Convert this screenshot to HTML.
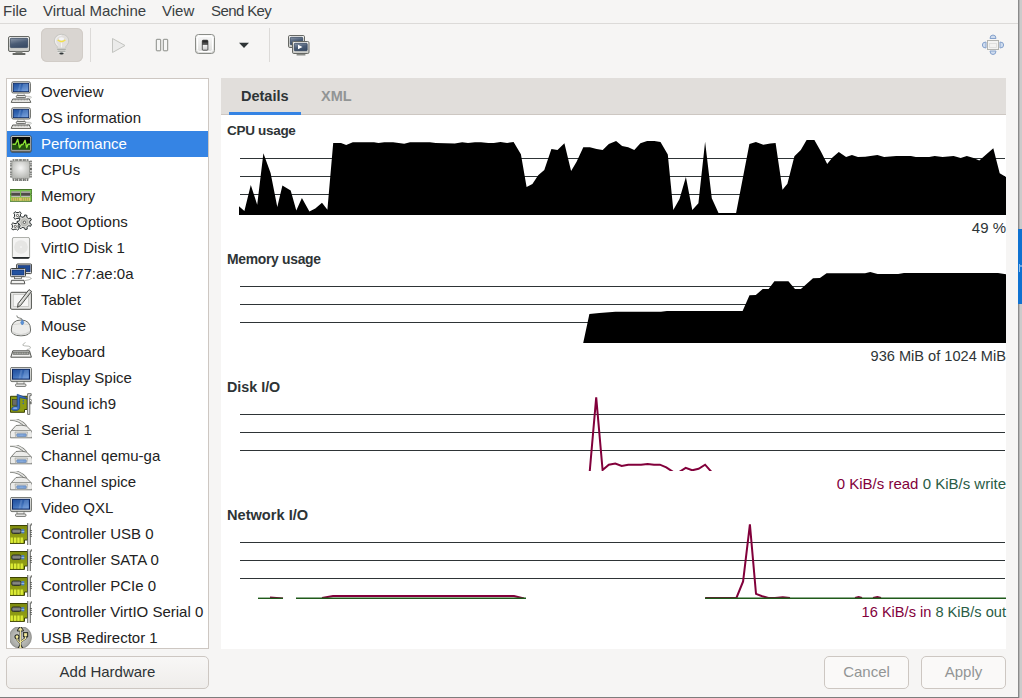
<!DOCTYPE html>
<html><head><meta charset="utf-8">
<style>
*{margin:0;padding:0;box-sizing:border-box}
html,body{width:1022px;height:698px;overflow:hidden;background:#f6f5f4;font-family:"Liberation Sans",sans-serif;color:#2e3436;position:relative}
.a{position:absolute}
.t{position:absolute;white-space:nowrap;font-size:15px;line-height:18px;color:#3a4042}
#menubar{left:0;top:0;width:1018px;height:24px;border-bottom:1px solid #dcdad8}
#list{left:6px;top:78px;width:203px;height:571px;background:#fff;border:1px solid #cdc7c2;overflow:hidden}
.row{position:absolute;left:0;width:201px;height:26px}
.row .lbl{position:absolute;left:34px;top:4px;font-size:15px;line-height:18px;color:#222;white-space:nowrap}
.row.sel{background:#3584e4}
.row.sel .lbl{color:#fff}
.ico{position:absolute;left:3px;top:2px;width:22px;height:22px;overflow:visible}
.btn{position:absolute;border:1px solid #cdc7c2;border-radius:5px;background:linear-gradient(#f8f7f6,#efedeb);text-align:center;font-size:15px;line-height:29px}
#nb{left:221px;top:78px;width:785px;height:571px;background:#fff}
#tabs{left:221px;top:78px;width:785px;height:37px;background:#e1dedb;border-bottom:1px solid #cdc7c2}
.glabel{position:absolute;font-weight:bold;font-size:14px;line-height:17px;color:#2e3436;letter-spacing:-0.3px}
.rlabel{position:absolute;right:16px;font-size:15px;line-height:18px;color:#2e3436;white-space:nowrap;text-align:right}
</style></head><body>
<svg width="0" height="0" style="position:absolute">
<defs>
<linearGradient id="gscr" x1="0" y1="0" x2="0.5" y2="1"><stop offset="0" stop-color="#1d4d9c"/><stop offset="0.6" stop-color="#3a6cb6"/><stop offset="1" stop-color="#5b8bd0"/></linearGradient>
<linearGradient id="gframe" x1="0" y1="0" x2="0" y2="1"><stop offset="0" stop-color="#f4f4f2"/><stop offset="1" stop-color="#c8c9c5"/></linearGradient>
<linearGradient id="gdark" x1="0" y1="0" x2="0" y2="1"><stop offset="0" stop-color="#8b96a6"/><stop offset="1" stop-color="#3a4d66"/></linearGradient>
<radialGradient id="gchip" cx="0.5" cy="0.4" r="0.6"><stop offset="0" stop-color="#f6f6f5"/><stop offset="1" stop-color="#b9bab6"/></radialGradient>
<linearGradient id="gcard" x1="0" y1="0" x2="0" y2="1"><stop offset="0" stop-color="#7d8a0e"/><stop offset="0.6" stop-color="#8e9b14"/><stop offset="1" stop-color="#9aa818"/></linearGradient>
<radialGradient id="gusb" cx="0.5" cy="0.5" r="0.55"><stop offset="0" stop-color="#d2d3cf"/><stop offset="0.8" stop-color="#a9aaa6"/><stop offset="1" stop-color="#7b7c78"/></radialGradient>
<symbol id="i-comp" viewBox="0 0 22 22">
 <rect x="1.7" y="0.8" width="18.7" height="11.2" rx="1.6" fill="url(#gframe)" stroke="#696b66" stroke-width="1"/>
 <rect x="3.3" y="2.3" width="15.4" height="8.3" fill="url(#gscr)" stroke="#0a2763" stroke-width="0.8"/>
 <path d="M9.5 2.8 L7.6 10.2 H9.4 L11.3 2.8 Z M13.2 2.8 L11.3 10.2 H18.2 V2.8 Z" fill="#a9c4ea" opacity="0.25"/>
 <path d="M8 12.4 H14 L14.6 14.8 H7.4 Z" fill="#f0f0ee" stroke="#8a8c87" stroke-width="0.6"/>
 <rect x="6.3" y="14.6" width="9.4" height="2" rx="0.8" fill="#f4f4f2" stroke="#555753" stroke-width="0.9"/>
 <path d="M15.5 15.2 Q21.5 15 21.5 16.3 Q21.5 17.3 17 17.3" stroke="#b8bab5" fill="none" stroke-width="0.9"/>
 <path d="M2.7 18 H19.3 L20.8 21.4 H1.2 Z" fill="#f4f4f2" stroke="#5d5f5a" stroke-width="1"/>
 <path d="M3.6 18.9 H18.4" stroke="#6e706b" stroke-width="0.9" stroke-dasharray="1 0.5"/>
</symbol>
<symbol id="i-perf" viewBox="0 0 22 22">
 <rect x="0.9" y="2.9" width="20.2" height="16.2" rx="1.2" fill="#dcdcda" stroke="#3b3d39" stroke-width="1"/>
 <rect x="1.6" y="3.6" width="18.8" height="1" fill="#f4f4f2"/>
 <rect x="2.1" y="4" width="17.9" height="12.7" fill="#050805"/>
 <rect x="2.1" y="11.5" width="17.9" height="5.2" fill="#2d6a12" opacity="0.75"/>
 <path d="M2.5 11.3 H5.5 L7.7 6.4 L9.5 14.6 L11.5 11.5 H13 L15.1 7.3 L16.7 14.6 L18 11.3 H20" fill="none" stroke="#8ae234" stroke-width="1.4" stroke-linejoin="round"/>
 <rect x="1" y="17.5" width="20" height="1.6" fill="#5f615c"/>
</symbol>
<symbol id="i-cpu" viewBox="0 0 22 22">
 <g fill="#d0d0ce" stroke="#4a4c48" stroke-width="1"><rect x="3.2" y="-0.9" width="2.8" height="4" rx="1.4"/><rect x="3.2" y="18.6" width="2.8" height="4" rx="1.4"/><rect x="7.2" y="-0.9" width="2.8" height="4" rx="1.4"/><rect x="7.2" y="18.6" width="2.8" height="4" rx="1.4"/><rect x="11.0" y="-0.9" width="2.8" height="4" rx="1.4"/><rect x="11.0" y="18.6" width="2.8" height="4" rx="1.4"/><rect x="15.0" y="-0.9" width="2.8" height="4" rx="1.4"/><rect x="15.0" y="18.6" width="2.8" height="4" rx="1.4"/><rect x="-0.9" y="2.2" width="4" height="2.8" rx="1.4"/><rect x="18.8" y="2.2" width="4" height="2.8" rx="1.4"/><rect x="-0.9" y="6.7" width="4" height="2.8" rx="1.4"/><rect x="18.8" y="6.7" width="4" height="2.8" rx="1.4"/><rect x="-0.9" y="10.5" width="4" height="2.8" rx="1.4"/><rect x="18.8" y="10.5" width="4" height="2.8" rx="1.4"/><rect x="-0.9" y="15.1" width="4" height="2.8" rx="1.4"/><rect x="18.8" y="15.1" width="4" height="2.8" rx="1.4"/></g>
 <rect x="1.9" y="2.1" width="17.6" height="17.3" rx="0.8" fill="url(#gchip)" stroke="#8e908b" stroke-width="0.6"/>
</symbol>
<symbol id="i-mem" viewBox="0 0 22 22">
 <path d="M-0.5 4.5 H21.8 V8.6 H21 V10 H21.8 V16.3 H-0.5 V10 H0.3 V8.6 H-0.5 Z" fill="#78c24c" stroke="#3a6a1c" stroke-width="0.9"/>
 <rect x="1.3" y="6.5" width="8.7" height="5.3" fill="#4d4b47"/><rect x="11.1" y="6.5" width="9" height="5.3" fill="#4d4b47"/>
 <rect x="1.3" y="6.5" width="8.7" height="1.2" fill="#c9c7c2"/><rect x="11.1" y="6.5" width="9" height="1.2" fill="#c9c7c2"/>
 <rect x="1.3" y="10.8" width="8.7" height="1" fill="#d8d6d1"/><rect x="11.1" y="10.8" width="9" height="1" fill="#d8d6d1"/>
 <rect x="1.2" y="12.6" width="19" height="3.2" fill="#d9c66a"/>
 <path d="M2.3 12.6 V15.8 M4.3 12.6 V15.8 M6.3 12.6 V15.8 M8.3 12.6 V15.8 M12.3 12.6 V15.8 M14.3 12.6 V15.8 M16.3 12.6 V15.8 M18.3 12.6 V15.8" stroke="#8e9a3a" stroke-width="0.7"/>
</symbol>
<symbol id="i-gear" viewBox="0 0 22 22">
 <path d="M10.49 5.89 L11.31 6.89 L9.87 8.33 L8.87 7.50 L6.11 7.49 L6.11 7.49 L5.11 8.31 L3.67 6.87 L4.50 5.87 L4.51 3.11 L4.51 3.11 L3.69 2.11 L5.13 0.67 L6.13 1.50 L8.89 1.51 L8.89 1.51 L9.89 0.69 L11.33 2.13 L10.50 3.13 L10.49 5.89Z" fill="#f2f2f0" stroke="#2e3436" stroke-width="1"/>
 <circle cx="7.5" cy="4.5" r="1.1" fill="#fff" stroke="#3a3a36" stroke-width="0.8"/>
 <path d="M19.89 12.41 L21.53 13.29 L20.60 15.34 L18.86 14.68 L16.95 16.28 L16.95 16.28 L17.29 18.11 L15.11 18.67 L14.54 16.90 L12.09 16.40 L12.09 16.40 L10.88 17.81 L9.08 16.45 L10.11 14.90 L8.97 12.68 L8.97 12.68 L7.12 12.60 L7.06 10.35 L8.91 10.19 L9.94 7.92 L9.94 7.92 L8.84 6.42 L10.56 4.97 L11.85 6.32 L14.26 5.70 L14.26 5.70 L14.75 3.91 L16.96 4.36 L16.71 6.20 L18.69 7.70 L18.69 7.70 L20.40 6.97 L21.42 8.97 L19.83 9.92 L19.89 12.41Z" fill="#d9d9d6" stroke="#2e3436" stroke-width="1"/>
 <circle cx="14.4" cy="11.3" r="3.6" fill="#c4c5c1" stroke="#a8a9a5" stroke-width="0.6"/>
 <circle cx="14.4" cy="11.3" r="1.2" fill="#fff" stroke="#3a3a36" stroke-width="0.8"/>
 <path d="M8.20 16.75 L9.03 17.74 L7.62 19.14 L6.63 18.31 L3.95 18.30 L3.95 18.30 L2.96 19.13 L1.56 17.72 L2.39 16.73 L2.40 14.05 L2.40 14.05 L1.57 13.06 L2.98 11.66 L3.97 12.49 L6.65 12.50 L6.65 12.50 L7.64 11.67 L9.04 13.08 L8.21 14.07 L8.20 16.75Z" fill="#f2f2f0" stroke="#2e3436" stroke-width="1"/>
 <circle cx="5.3" cy="15.4" r="1.1" fill="#fff" stroke="#3a3a36" stroke-width="0.8"/>
</symbol>
<symbol id="i-disk" viewBox="0 0 22 22">
 <rect x="2.4" y="0.4" width="17.2" height="21" rx="1.6" fill="#f4f4f3" stroke="#9c9e99" stroke-width="0.9"/>
 <circle cx="11" cy="10" r="6.8" fill="#e6e6e4"/>
 <circle cx="11" cy="10" r="0.8" fill="#fbfbfb"/>
 <path d="M2.4 20 H19.6 Q19.6 21.7 18 21.7 H4 Q2.4 21.7 2.4 20 Z" fill="#262a2c"/>
</symbol>
<symbol id="i-nic" viewBox="0 0 22 22">
 <rect x="6.6" y="1" width="15" height="9.6" rx="1" fill="#e9e9e7" stroke="#3f413d" stroke-width="1"/>
 <rect x="8.1" y="2.5" width="12" height="6.3" fill="#1f4a94" stroke="#0a2763" stroke-width="0.6"/>
 <rect x="0.5" y="5.5" width="15" height="8.2" rx="1" fill="#e9e9e7" stroke="#3f413d" stroke-width="1"/>
 <rect x="2" y="7" width="12" height="5" fill="#2352a0" stroke="#0a2763" stroke-width="0.6"/>
 <path d="M15.5 14 Q20 13.5 21.5 15.5 Q20 17 15 17.5" stroke="#a9aba6" fill="none" stroke-width="0.9"/>
 <rect x="4.5" y="13.7" width="7" height="2" fill="#eee" stroke="#555753" stroke-width="0.7"/>
 <path d="M1.5 17.3 H14 L14.8 20.8 H0.8 Z" fill="#f2f2f0" stroke="#3f413d" stroke-width="0.9"/>
</symbol>
<symbol id="i-tab" viewBox="0 0 22 22">
 <rect x="0.6" y="3.3" width="20.8" height="17" rx="1.2" fill="#e6e6e4" stroke="#4f514d" stroke-width="1"/>
 <rect x="3.3" y="5.5" width="15.4" height="12" fill="#f6f6f5" stroke="#c2c3bf" stroke-width="0.8"/>
 <path d="M19 0.6 L21.6 2.4 L10.6 16.5 L7.5 18.3 L8.1 14.6 Z" fill="#c9cac6" stroke="#3f413d" stroke-width="0.9"/>
 <path d="M19.6 1.8 L9.2 15.2" stroke="#f4f4f2" stroke-width="0.8"/>
</symbol>
<symbol id="i-mouse" viewBox="0 0 22 22">
 <path d="M6.8 0.5 Q6.8 3 9.5 3 Q12.3 3 12.3 5.5" fill="none" stroke="#6d6f6a" stroke-width="0.9"/>
 <path d="M1.3 15 Q1.3 5 11 5 Q20.6 5 20.6 15 Q20.6 20.8 11 20.8 Q1.3 20.8 1.3 15 Z" fill="#ececea" stroke="#6d6f6a" stroke-width="1"/>
 <path d="M2.5 16 Q11 22 19.5 16 Q19 20 11 20.2 Q3 20 2.5 16 Z" fill="#d6d6d4"/>
 <path d="M3 9.5 Q11 8 19 9.5" fill="none" stroke="#cfd0cc" stroke-width="0.8"/>
 <path d="M12.3 4.8 L13.8 7.2 Q13.6 9.3 12.3 10 Q11 9.3 10.8 7.2 Z" fill="#5b93d8" stroke="#3f74bd" stroke-width="0.5"/>
</symbol>
<symbol id="i-kbd" viewBox="0 0 22 22">
 <path d="M15.5 1.5 Q12.5 3 12.8 4.2 Q13.2 5 19 5.2 Q21 5.6 20.3 7.2 Q19.8 8.2 17 8.5 V9.8" fill="none" stroke="#b0b2ad" stroke-width="0.9"/>
 <path d="M2.8 9.8 H19.5 L21.4 16.2 H0.8 Z" fill="#f2f2f0" stroke="#4f514d" stroke-width="1"/>
 <rect x="2.6" y="10.8" width="17" height="3" rx="0.8" fill="#6a6c68"/>
 <path d="M3.4 12.3 H18.8" stroke="#a9aba6" stroke-width="1.4" stroke-dasharray="1.3 0.4"/>
</symbol>
<symbol id="i-disp" viewBox="0 0 22 22">
 <rect x="0.6" y="0.4" width="20.8" height="14.2" rx="1.3" fill="url(#gframe)" stroke="#6d6f6a" stroke-width="1"/>
 <rect x="2.5" y="2.3" width="17" height="9.8" fill="url(#gscr)" stroke="#0a2763" stroke-width="1"/>
 <path d="M10.5 3 L8.5 11.5 H10.5 L12.5 3 Z M14.5 3 L12.5 11.5 H18.5 V3 Z" fill="#a9c4ea" opacity="0.25"/>
 <rect x="7" y="14.6" width="7" height="2.6" fill="#eaeae8" stroke="#6d6f6a" stroke-width="0.7"/>
 <rect x="5.5" y="17" width="10.5" height="2.4" rx="1" fill="#f0f0ee" stroke="#555753" stroke-width="0.8"/>
</symbol>
<symbol id="i-snd" viewBox="0 0 22 22">
 <path d="M0.5 3.3 H17.2 V16.5 H14.5 V19.3 H0.5 Z" fill="#8d9c12" stroke="#3d4405" stroke-width="1"/>
 <rect x="2.6" y="6.6" width="4.6" height="5.6" fill="#6a6c66" stroke="#2e3436" stroke-width="0.6"/>
 <rect x="12.6" y="7.2" width="1.4" height="1.3" fill="#2f5fb0"/><rect x="12.6" y="9.8" width="1.4" height="1.3" fill="#2f5fb0"/>
 <path d="M17.6 0.7 H21.2 V2.6 H19.8 V21.4 H17.6 Z" fill="#ececea" stroke="#5f615c" stroke-width="0.9"/>
 <rect x="19.9" y="6.7" width="1.6" height="1.6" fill="#fff" stroke="#5f615c" stroke-width="0.6"/><rect x="19.9" y="9.3" width="1.6" height="1.6" fill="#fff" stroke="#5f615c" stroke-width="0.6"/>
 <path d="M7.2 1.3 L15.5 4.3 L17.2 6 L9.6 4.6 V14.5 Q9.6 17.6 5 17.6 Q1.2 17.6 1.6 15.5 Q2.3 13.2 7.2 13.4 Z" fill="#3a6fc4" stroke="#1a3f86" stroke-width="0.7"/>
 <ellipse cx="5.2" cy="15.2" rx="2.2" ry="0.9" fill="#a8c4ec" opacity="0.7"/>
</symbol>
<symbol id="i-ser" viewBox="0 0 22 22">
 <path d="M-0.8 0.2 Q9 -0.5 16 7.5" fill="none" stroke="#777a74" stroke-width="3"/>
 <path d="M-0.8 0.2 Q9 -0.5 16 7.5" fill="none" stroke="#e4e4e2" stroke-width="1.6"/>
 <path d="M6 6.5 Q11 5.5 16.5 7 L21.5 12 Q22.8 13.5 22.5 17 L22 18.8 H0.5 L0 17 Q-0.3 13.5 1 12 Z" fill="#ececea" stroke="#6f716c" stroke-width="0.9"/>
 <path d="M1.5 11.5 H21" stroke="#8f918c" stroke-width="0.9"/>
 <path d="M5 13 H17.5 L16.8 18.3 H5.7 Z" fill="#dcdcda" stroke="#9c9e99" stroke-width="0.6"/>
 <rect x="6.8" y="14.8" width="9.4" height="2.6" rx="0.6" fill="#6f9ad6" stroke="#4f6f9f" stroke-width="0.5"/>
 <path d="M7.6 16.1 H15.6" stroke="#c5d8f0" stroke-width="0.8" stroke-dasharray="0.6 0.6"/>
</symbol>
<symbol id="i-ctl" viewBox="0 0 22 22">
 <path d="M-0.5 2.5 H17.5 V17 H14.5 V20.4 H-0.5 Z" fill="url(#gcard)" stroke="#3d4304" stroke-width="1"/>
 <g fill="#e4f43a" opacity="0.9"><rect x="0.6" y="14.5" width="2.3" height="5.4"/><rect x="4" y="14.5" width="2.3" height="5.4"/><rect x="7.3" y="14.5" width="2.3" height="5.4"/><rect x="10.6" y="14.5" width="2.3" height="5.4"/></g>
 <rect x="1.6" y="5.9" width="9.6" height="4.6" rx="1.8" fill="#676964" stroke="#232725" stroke-width="0.8"/>
 <rect x="2.8" y="7.4" width="7.4" height="1.4" fill="#8e908b"/>
 <rect x="11.4" y="6.1" width="2.9" height="4.3" fill="#4d7fc8"/><rect x="11.4" y="8" width="2.9" height="0.7" fill="#b8d0f0"/>
 <path d="M17.7 -0.6 H22 V1.9 H20.3 V22.6 H17.7 Z" fill="#ececea" stroke="#4f514d" stroke-width="0.9"/>
 <rect x="20.3" y="7.4" width="1.9" height="2" fill="#fff" stroke="#4f514d" stroke-width="0.7"/><rect x="20.3" y="11.4" width="1.9" height="2" fill="#fff" stroke="#4f514d" stroke-width="0.7"/>
</symbol>
<symbol id="i-usb" viewBox="0 0 22 22">
 <circle cx="10.35" cy="10.3" r="11.2" fill="url(#gusb)" stroke="#8a8b87" stroke-width="0.5"/>
 <g stroke="#262a28" stroke-width="1.8" fill="#262a28" stroke-linejoin="round">
 <path d="M10.4 -0.2 L13 3.6 H7.8 Z"/><path d="M10.4 3 V20.5"/><path d="M15.5 9.5 V11.5 L10.4 15"/><path d="M7 10 V12.5 L10.4 16.5"/>
 <rect x="13.8" y="5.8" width="3.5" height="3.7"/><circle cx="7" cy="9.8" r="1.7"/><path d="M8.6 21 L10.4 18.3 L12.2 21 Z"/>
 </g>
 <g stroke="#f5eb9c" stroke-width="1.1" fill="#f5eb9c" stroke-linejoin="round">
 <path d="M10.4 0.4 L12.5 3.3 H8.3 Z" stroke-width="0.5"/><path d="M10.4 3 V20.5"/><path d="M15.5 9.5 V11.5 L10.4 15" fill="none"/><path d="M7 10 V12.5 L10.4 16.5" fill="none"/>
 <rect x="14.2" y="6.2" width="2.7" height="2.9" stroke-width="0.3"/><circle cx="7" cy="9.8" r="1.3" stroke-width="0.3"/><path d="M9 21.5 L10.4 18.8 L11.8 21.5 Z" stroke-width="0.5"/>
 </g>
</symbol>
</defs></svg>

<div class="a" id="menubar"></div>
<div class="t" style="left:3px;top:2px">File</div>
<div class="t" style="left:43px;top:2px">Virtual Machine</div>
<div class="t" style="left:162px;top:2px">View</div>
<div class="t" style="left:211px;top:2px;letter-spacing:-0.6px">Send Key</div>

<!-- toolbar -->
<div class="a" style="left:41px;top:28px;width:42px;height:34px;background:#d9d5d1;border-radius:6px;box-shadow:inset 0 0 0 1px #d1ccc7"></div>
<div class="a" style="left:90px;top:28px;width:1px;height:34px;background:#dcdad8"></div>
<div class="a" style="left:269px;top:28px;width:1px;height:34px;background:#dcdad8"></div>
<svg class="a" style="left:0;top:24px" width="1018" height="44" viewBox="0 24 1018 44">
<defs>
<linearGradient id="gdscr" x1="0" y1="0" x2="0.4" y2="1"><stop offset="0" stop-color="#8e9aab"/><stop offset="0.6" stop-color="#4a5c75"/><stop offset="1" stop-color="#3b4e68"/></linearGradient>
<radialGradient id="gbulb" cx="0.5" cy="0.35" r="0.6"><stop offset="0" stop-color="#ffffff"/><stop offset="1" stop-color="#d7d7d5"/></radialGradient>
<linearGradient id="gsw" x1="0" y1="0" x2="0" y2="1"><stop offset="0" stop-color="#fafafa"/><stop offset="1" stop-color="#dcdcda"/></linearGradient>
<linearGradient id="gsw2" x1="0" y1="0" x2="0" y2="1"><stop offset="0" stop-color="#111"/><stop offset="0.45" stop-color="#666"/><stop offset="0.5" stop-color="#eee"/><stop offset="1" stop-color="#ccc"/></linearGradient>
</defs>
<!-- monitor -->
<rect x="8.5" y="36.5" width="21" height="15" rx="1.5" fill="url(#gframe)" stroke="#666864" stroke-width="1"/>
<rect x="10.3" y="38.3" width="17.4" height="9.3" rx="0.8" fill="url(#gdscr)" stroke="#2b3d57" stroke-width="0.7"/>
<rect x="15.5" y="51.5" width="7" height="1.6" fill="#8a8c87"/>
<rect x="12.5" y="53" width="13" height="2" rx="0.8" fill="#666864"/>
<!-- bulb -->
<path d="M61.5 34.3 C57 34.3 54.3 37.5 54.3 41 C54.3 43.5 56 45.2 57.2 46.5 L57.3 48 H65.7 L65.8 46.5 C67 45.2 68.7 43.5 68.7 41 C68.7 37.5 66 34.3 61.5 34.3 Z" fill="#e9e8e6" fill-opacity="0.55" stroke="#c3c4c0" stroke-width="0.9"/>
<path d="M61.5 35.4 C58 35.4 55.6 38 55.6 41 C55.6 43 56.8 44.3 57.8 45.5" fill="none" stroke="#f8f8f7" stroke-width="0.8"/>
<ellipse cx="61.5" cy="38.8" rx="2.6" ry="1.6" fill="#f4f4f6"/>
<path d="M57.7 40 Q61.5 43.2 65.3 40" fill="none" stroke="#f2e04a" stroke-width="1.5"/>
<path d="M61.5 42.6 V47.5" stroke="#f4f4f2" stroke-width="1"/>
<rect x="57.2" y="47.6" width="8.6" height="5.3" rx="1.2" fill="#e6e6e4"/>
<path d="M57.2 49.2 H65.8 M57.5 51.2 H65.5" stroke="#7f817c" stroke-width="0.8"/>
<ellipse cx="61.5" cy="53.6" rx="2.2" ry="1" fill="#2e3436"/>
<!-- play (disabled) -->
<path d="M112.5 38.5 L125 45.5 L112.5 52.5 Z" fill="#ebebea" stroke="#c3c4c0" stroke-width="1"/>
<!-- pause (disabled) -->
<rect x="156.3" y="39.3" width="4.4" height="11.5" rx="0.6" fill="#f6f6f5" stroke="#8a8c87" stroke-width="1"/>
<rect x="163.3" y="39.3" width="4.4" height="11.5" rx="0.6" fill="#f6f6f5" stroke="#8a8c87" stroke-width="1"/>
<!-- switch -->
<rect x="195.5" y="34.5" width="19" height="19" rx="3" fill="url(#gsw)" stroke="#8a8c87" stroke-width="1"/>
<rect x="197.5" y="36.5" width="15" height="15" rx="2" fill="none" stroke="#ffffff" stroke-width="1"/>
<rect x="202.3" y="40.2" width="5.6" height="10" rx="0.8" fill="url(#gsw2)" stroke="#222" stroke-width="0.7"/>
<!-- dropdown arrow -->
<path d="M239 42.7 H249 L244 48 Z" fill="#2e3436"/>
<!-- console -->
<rect x="288.5" y="35.5" width="16" height="12" rx="1.3" fill="url(#gframe)" stroke="#666864" stroke-width="1"/>
<rect x="290.3" y="37.3" width="12.4" height="7.4" rx="0.8" fill="url(#gdscr)" stroke="#2b3d57" stroke-width="0.7"/>
<rect x="292.5" y="41.5" width="16.5" height="12" rx="1.3" fill="url(#gframe)" stroke="#666864" stroke-width="1"/>
<rect x="294.3" y="43.3" width="12.9" height="7.4" rx="0.8" fill="url(#gdscr)" stroke="#2b3d57" stroke-width="0.7"/>
<path d="M298 44.8 L302.5 47 L298 49.2 Z" fill="#fff"/>
<rect x="296.5" y="54" width="9" height="1.6" rx="0.6" fill="#8a8c87"/>
<!-- fullscreen -->
<rect x="987.5" y="40.5" width="11" height="9" fill="#f4f4f2" stroke="#b3b4b0" stroke-width="1"/>
<rect x="989.5" y="43.5" width="7" height="4" fill="none" stroke="#dcdcda" stroke-width="0.8"/>
<g fill="#cfdcee" stroke="#86a2cc" stroke-width="1">
<path d="M990 38.5 Q990 35 993 35 Q996 35 996 38.5 Z"/>
<path d="M990 51 Q990 54.5 993 54.5 Q996 54.5 996 51 Z"/>
<path d="M986 42 Q982.3 42 982.3 45 Q982.3 48 986 48 Z"/>
<path d="M1000 42 Q1003.7 42 1003.7 45 Q1003.7 48 1000 48 Z"/>
</g>
</svg>


<div class="a" id="list">
<div class="row" style="top:0px"><svg class="ico" viewBox="0 0 22 22"><use href="#i-comp"/></svg><div class="lbl">Overview</div></div>
<div class="row" style="top:26px"><svg class="ico" viewBox="0 0 22 22"><use href="#i-comp"/></svg><div class="lbl">OS information</div></div>
<div class="row sel" style="top:52px"><svg class="ico" viewBox="0 0 22 22"><use href="#i-perf"/></svg><div class="lbl">Performance</div></div>
<div class="row" style="top:78px"><svg class="ico" viewBox="0 0 22 22"><use href="#i-cpu"/></svg><div class="lbl">CPUs</div></div>
<div class="row" style="top:104px"><svg class="ico" viewBox="0 0 22 22"><use href="#i-mem"/></svg><div class="lbl">Memory</div></div>
<div class="row" style="top:130px"><svg class="ico" viewBox="0 0 22 22"><use href="#i-gear"/></svg><div class="lbl">Boot Options</div></div>
<div class="row" style="top:156px"><svg class="ico" viewBox="0 0 22 22"><use href="#i-disk"/></svg><div class="lbl">VirtIO Disk 1</div></div>
<div class="row" style="top:182px"><svg class="ico" viewBox="0 0 22 22"><use href="#i-nic"/></svg><div class="lbl">NIC :77:ae:0a</div></div>
<div class="row" style="top:208px"><svg class="ico" viewBox="0 0 22 22"><use href="#i-tab"/></svg><div class="lbl">Tablet</div></div>
<div class="row" style="top:234px"><svg class="ico" viewBox="0 0 22 22"><use href="#i-mouse"/></svg><div class="lbl">Mouse</div></div>
<div class="row" style="top:260px"><svg class="ico" viewBox="0 0 22 22"><use href="#i-kbd"/></svg><div class="lbl">Keyboard</div></div>
<div class="row" style="top:286px"><svg class="ico" viewBox="0 0 22 22"><use href="#i-disp"/></svg><div class="lbl">Display Spice</div></div>
<div class="row" style="top:312px"><svg class="ico" viewBox="0 0 22 22"><use href="#i-snd"/></svg><div class="lbl">Sound ich9</div></div>
<div class="row" style="top:338px"><svg class="ico" viewBox="0 0 22 22"><use href="#i-ser"/></svg><div class="lbl">Serial 1</div></div>
<div class="row" style="top:364px"><svg class="ico" viewBox="0 0 22 22"><use href="#i-ser"/></svg><div class="lbl">Channel qemu-ga</div></div>
<div class="row" style="top:390px"><svg class="ico" viewBox="0 0 22 22"><use href="#i-ser"/></svg><div class="lbl">Channel spice</div></div>
<div class="row" style="top:416px"><svg class="ico" viewBox="0 0 22 22"><use href="#i-disp"/></svg><div class="lbl">Video QXL</div></div>
<div class="row" style="top:442px"><svg class="ico" viewBox="0 0 22 22"><use href="#i-ctl"/></svg><div class="lbl">Controller USB 0</div></div>
<div class="row" style="top:468px"><svg class="ico" viewBox="0 0 22 22"><use href="#i-ctl"/></svg><div class="lbl">Controller SATA 0</div></div>
<div class="row" style="top:494px"><svg class="ico" viewBox="0 0 22 22"><use href="#i-ctl"/></svg><div class="lbl">Controller PCIe 0</div></div>
<div class="row" style="top:520px"><svg class="ico" viewBox="0 0 22 22"><use href="#i-ctl"/></svg><div class="lbl">Controller VirtIO Serial 0</div></div>
<div class="row" style="top:546px"><svg class="ico" viewBox="0 0 22 22"><use href="#i-usb"/></svg><div class="lbl">USB Redirector 1</div></div>
</div>
<div class="a" id="nb"></div>
<div class="a" id="tabs"></div>
<div class="a" style="left:229px;top:112px;width:72px;height:3px;background:#3584e4"></div>
<div class="t" style="left:241px;top:87px;font-weight:bold;font-size:14.5px;color:#2e3436">Details</div>
<div class="t" style="left:321px;top:87px;font-weight:bold;font-size:14.5px;color:#929595">XML</div>

<svg class="a" style="left:0;top:0" width="1022" height="698">
<defs><clipPath id="cd"><rect x="239" y="390" width="767" height="81"/></clipPath><clipPath id="cn"><rect x="239" y="518" width="767" height="81"/></clipPath></defs>
<rect x="240" y="158" width="765" height="1" fill="#2e3436"/><rect x="240" y="176" width="765" height="1" fill="#2e3436"/><rect x="240" y="194" width="765" height="1" fill="#2e3436"/>
<polygon points="239,206.3 244.4,211 250.8,184.9 257.2,204.8 263.4,153.2 270.6,173 277.3,207 282.4,185.6 290.7,190.5 296.3,210.6 301.9,198.1 309.4,211.5 315.3,208.4 322,202.8 327.4,209.8 333.2,143.1 341,143 346.2,144.9 352.8,142.3 374,142.3 378.5,143 384.3,142.3 393.1,142.3 404.2,143.7 410,142.3 429.9,142.3 435.7,143 454.8,143.5 462.2,142.3 468,143 474.9,142.2 481,142.3 488.3,142.9 493.8,142.9 500.5,142.1 507.1,142.9 513.6,142.1 520.9,154.2 526.6,187.1 532.4,184 538.2,175.2 544.3,170.1 551.4,149 557.5,150 564.4,143.3 571.1,170.9 576.6,161.8 583.3,147.2 589.9,147.2 596.6,149 602.7,149.9 608.8,144.1 616.1,141.1 622.1,146 628.2,147.2 634.3,149.9 640.4,143.3 647.1,141.1 654.4,141.1 660.5,142.1 667.8,154.5 673.3,209.9 679.5,198.9 685.9,177 692.3,210.1 698.4,203.2 705.1,141.7 711.8,198.3 718.5,212.9 736.1,212.9 749.4,144.1 755.9,142.1 763.3,144.7 770.3,143.5 775.6,142.9 782.5,189.8 787.4,183.7 794.4,156.3 800.8,149.9 806.6,140.1 814.4,140.1 820.9,151.4 827.2,164 832.4,157.5 838.8,152.1 846.1,156.9 851.9,155.1 857.9,156.9 865.2,156.7 877.4,155.1 884.1,156.9 896.3,156.1 910.9,156.1 915.8,156.9 929.2,156.9 934.7,156.1 942.6,156.9 953.6,156.1 960.7,158 966.8,156.1 973.6,157.9 979.3,160.6 993.3,148.2 999.7,173.3 1006,176.9 1006,215 239,215" fill="#000"/>
<rect x="240" y="286" width="765" height="1" fill="#2e3436"/><rect x="240" y="304" width="765" height="1" fill="#2e3436"/><rect x="240" y="322" width="765" height="1" fill="#2e3436"/>
<polygon points="583.2,343 589.4,314 599.4,313.1 615.5,311.7 661,311.7 666.9,310.9 742.6,310.9 749.5,295.2 755.8,294.9 762.7,289.1 768.6,289.1 774.4,281.3 788.4,281.3 795,288.9 800.9,288.9 813,278.3 819.9,278.1 826.6,273.2 865,273.2 870.3,272 877.6,273.9 898.2,273.9 904,272.9 998,272.9 1006,274.2 1006,343" fill="#000"/>
<rect x="240" y="414" width="765" height="1" fill="#2e3436"/><rect x="240" y="432" width="765" height="1" fill="#2e3436"/><rect x="240" y="450" width="765" height="1" fill="#2e3436"/>
<g clip-path="url(#cd)" fill="none" stroke="#82003b" stroke-width="2" stroke-linejoin="miter">
<polyline points="589.5,474 596.2,397.4 602.6,470 608.8,464.7 615.3,463.5 621.7,465.9 628.2,464.7 641.1,464.7 647.6,463.9 654,464.7 659.9,464.7 666.3,467.4 674,472.5"/><polyline points="678.5,472.5 685.7,467.8 692.2,470.3 698.6,468.8 705.1,464.7 712,472.5"/>
</g>
<rect x="240" y="542" width="765" height="1" fill="#2e3436"/><rect x="240" y="560" width="765" height="1" fill="#2e3436"/><rect x="240" y="578" width="765" height="1" fill="#2e3436"/>
<g clip-path="url(#cn)" fill="none" stroke-width="2">
<polyline points="270,597.5 283,598.5" stroke="#82003b"/>
<polyline points="322,598 333,595.9 514,596 524,598.5" stroke="#82003b"/>
<polyline points="705.2,598.1 736.4,597.9 743.1,581.4 749.9,524.3 756,593.9 762.2,596.2 768.5,598 775,598.1 782.8,597.2 790,598" stroke="#82003b"/>
<polyline points="855,598 858.6,597 862,598" stroke="#82003b"/>
<polyline points="873,598 877.4,597 881,598" stroke="#82003b"/>
<polyline points="258,598.6 283,598.6" stroke="#1f5a1a" />
<polyline points="296,598.6 526,598.6" stroke="#1f5a1a" />
<polyline points="705,598.6 1006,598.6" stroke="#1f5a1a" />
</g>
</svg>
<div class="glabel" style="left:227px;top:122px;font-size:13.5px">CPU usage</div>
<div class="glabel" style="left:227px;top:251px;font-size:13.9px">Memory usage</div>
<div class="glabel" style="left:227px;top:379px;font-size:14.3px;letter-spacing:0">Disk I/O</div>
<div class="glabel" style="left:227px;top:507px;font-size:14.6px;letter-spacing:0">Network I/O</div>
<div class="rlabel" style="top:219px">49 %</div>
<div class="rlabel" style="top:347px;font-size:14.6px">936 MiB of 1024 MiB</div>
<div class="rlabel" style="top:475px"><span style="color:#82003b">0 KiB/s read</span> <span style="color:#295c45">0 KiB/s write</span></div>
<div class="rlabel" style="top:603px;font-size:14.6px"><span style="color:#82003b">16 KiB/s in</span> <span style="color:#295c45">8 KiB/s out</span></div>
<div class="btn" style="left:6px;top:656px;width:203px;height:33px">Add Hardware</div>
<div class="btn" style="left:824px;top:656px;width:85px;height:33px;color:#929595;background:#faf9f8">Cancel</div>
<div class="btn" style="left:921px;top:656px;width:85px;height:33px;color:#929595;background:#faf9f8">Apply</div>

<!-- window border -->
<div class="a" style="left:1018px;top:0;width:1px;height:698px;background:#8a8a8a"></div>
<div class="a" style="left:1019px;top:0;width:1px;height:698px;background:#b4b4b4"></div>
<div class="a" style="left:1020px;top:0;width:2px;height:698px;background:#cbcbcb"></div>
<div class="a" style="left:1018px;top:229px;width:4px;height:75px;background:#0f72d1"></div>
<div class="a" style="left:1019px;top:264px;width:1px;height:8px;background:#8fc0ee"></div><div class="a" style="left:1020px;top:265px;width:2px;height:2px;background:#6fa8e4"></div>
<div class="a" style="left:0;top:697px;width:1019px;height:1px;background:#7d7d7d"></div>
</body></html>
